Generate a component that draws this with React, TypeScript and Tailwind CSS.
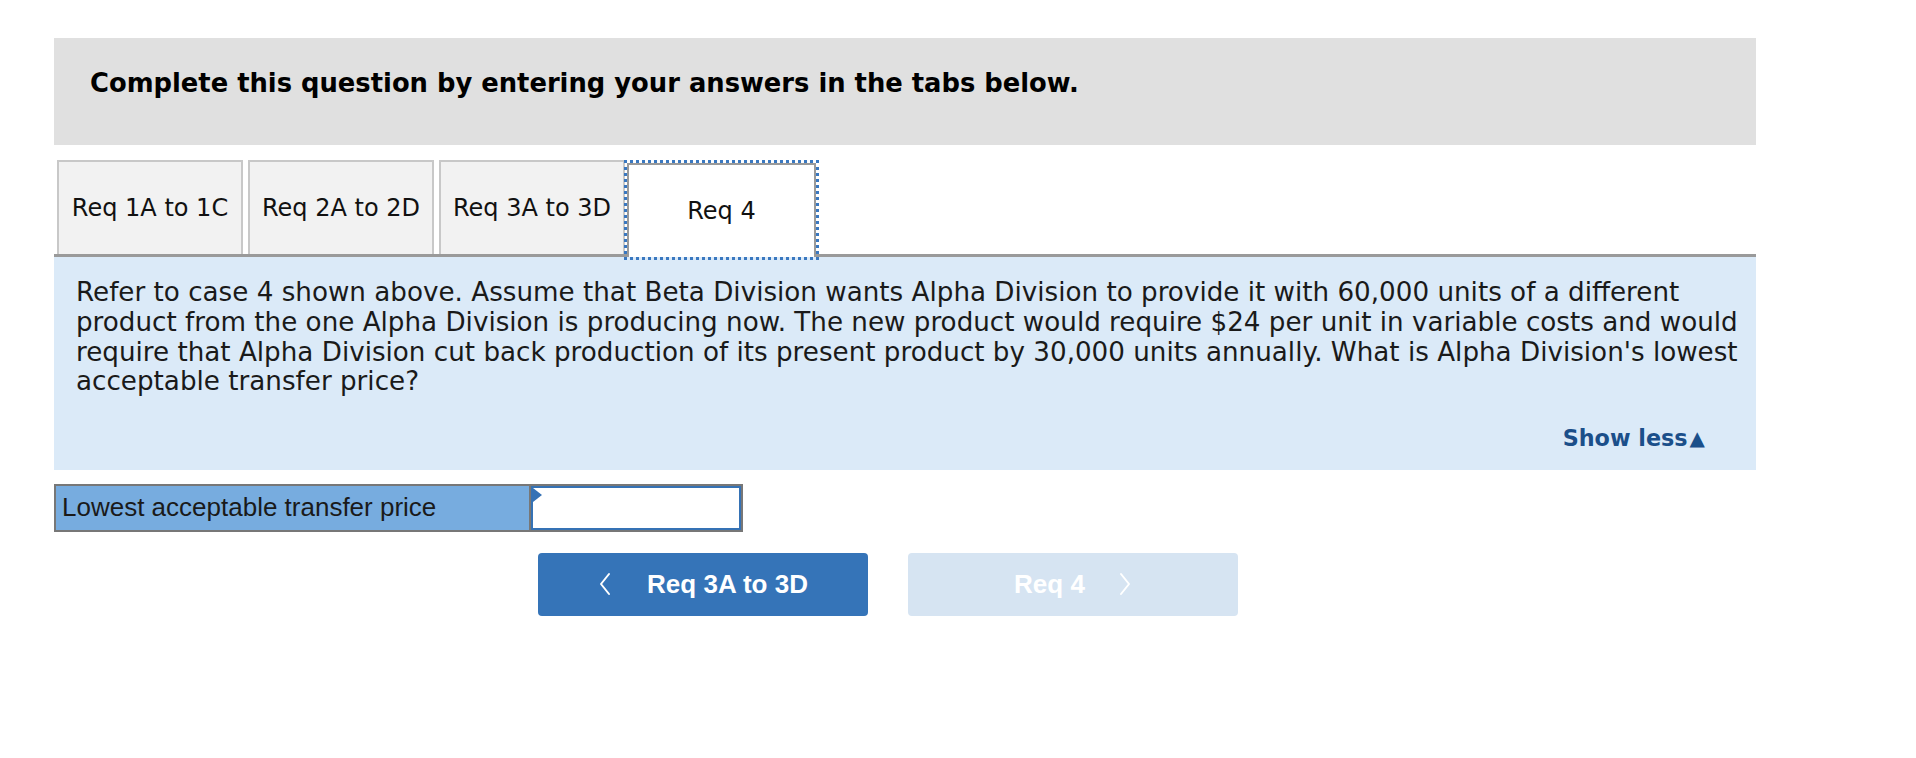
import * as React from 'react';

// ============================================================================
// Data
// ============================================================================

const tabs = ['Req 1A to 1C', 'Req 2A to 2D', 'Req 3A to 3D', 'Req 4'];
const activeTab = 3;

const question =
  "Refer to case 4 shown above. Assume that Beta Division wants Alpha Division to provide it with 60,000 units of a different product from the one Alpha Division is producing now. The new product would require $24 per unit in variable costs and would require that Alpha Division cut back production of its present product by 30,000 units annually. What is Alpha Division's lowest acceptable transfer price?";

// ============================================================================
// Pieces
// ============================================================================

function Chevron({ dir }: { dir: 'left' | 'right' }) {
  return (
    <svg width="14" height="26" viewBox="0 0 14 26" fill="none" className="shrink-0">
      <path
        d={dir === 'left' ? 'M11 3 L3 13 L11 23' : 'M3 3 L11 13 L3 23'}
        stroke="white"
        strokeWidth="2"
        strokeLinecap="round"
        strokeLinejoin="round"
      />
    </svg>
  );
}

function Tabs() {
  return (
    <div className="mt-[15px] flex items-end pl-[3px] border-b-[3px] border-[#9a9a9a]">
      {tabs.map((t, i) =>
        i === activeTab ? (
          <div
            key={t}
            className="ml-[2px] h-[94px] w-[189px] -mb-[3px] flex items-center justify-center bg-white border-2 border-[#9a9a9a] border-b-0 outline-[3px] outline-dotted outline-[#3a78c0] text-[24px] text-[#111]"
          >
            {t}
          </div>
        ) : (
          <div
            key={t}
            className={`${i > 0 ? 'ml-[5px]' : ''} h-[94px] w-[186px] flex items-center justify-center bg-[#f2f2f2] border-2 border-b-0 border-[#c8c8c8] text-[24px] text-[#111]`}
          >
            {t}
          </div>
        )
      )}
    </div>
  );
}

// ============================================================================
// Main Component
// ============================================================================

export default function App() {
  return (
    <div className="w-[1916px] min-h-[758px] bg-white font-['Verdana','DejaVu_Sans',sans-serif]">
      <div className="ml-[54px] w-[1702px] pt-[38px]">
        <div className="h-[107px] bg-[#e0e0e0] pl-[36px] pt-[30px]">
          <h2 className="text-[25.8px] leading-[30px] font-bold text-black">
            Complete this question by entering your answers in the tabs below.
          </h2>
        </div>

        <Tabs />

        <div className="bg-[#dbeaf8] pl-[22px] pr-[8px] pt-[21px] pb-[16px]">
          <p className="text-[26.2px] leading-[29.8px] text-[#1a1a1a]">{question}</p>
          <div className="mt-[27px] flex justify-end pr-[43px]">
            <button className="flex items-center gap-[2px] text-[22.3px] leading-[29.5px] font-bold text-[#1b4f8a]">
              Show less
              <span className="text-[20px]">▲</span>
            </button>
          </div>
        </div>

        <div className="mt-[14px] flex h-[48px] w-[689px] border-2 border-[#777777] font-['Liberation_Sans',Arial,sans-serif]">
          <div className="w-[475px] bg-[#77acdf] border-r-2 border-[#777777] pl-[6px] flex items-center text-[26px] text-[#1a1a1a]">
            Lowest acceptable transfer price
          </div>
          <div className="relative flex-1 border-2 border-[#3572b5] bg-white">
            <svg width="10" height="14" viewBox="0 0 10 14" className="absolute left-0 top-0">
              <path d="M0 0 L9 7 L0 14 Z" fill="#3572b5" />
            </svg>
          </div>
        </div>

        <div className="mt-[21px] flex gap-[40px] pl-[484px] font-['Liberation_Sans',Arial,sans-serif]">
          <button className="h-[63px] w-[330px] rounded-[4px] bg-[#3574b8] flex items-center justify-center gap-[35px] text-white text-[26px] font-bold">
            <Chevron dir="left" />
            <span>Req 3A to 3D</span>
          </button>
          <button className="h-[63px] w-[330px] rounded-[4px] bg-[#d6e4f2] flex items-center justify-center gap-[33px] text-white text-[26px] font-bold">
            <span>Req 4</span>
            <Chevron dir="right" />
          </button>
        </div>
      </div>
    </div>
  );
}
